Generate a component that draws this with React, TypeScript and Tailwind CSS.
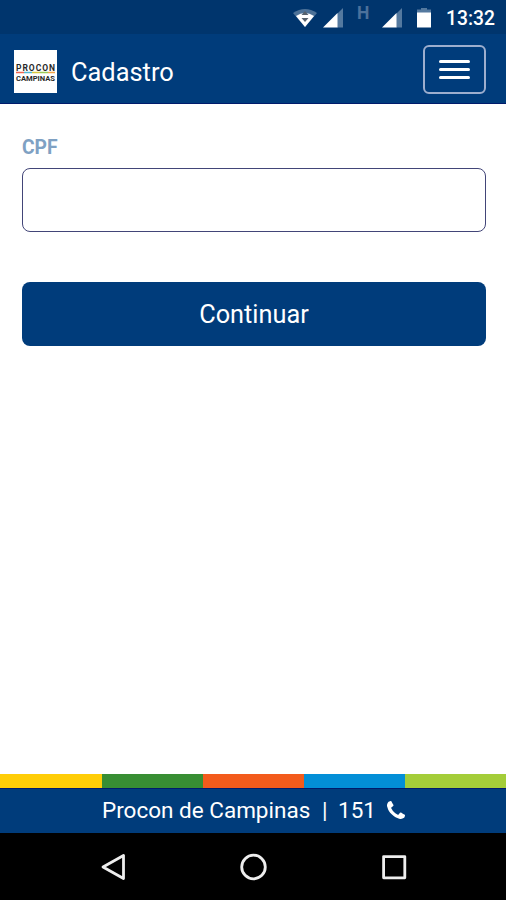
const STRIPES = ["bg-[#ffcd07]", "bg-[#388e33]", "bg-[#f35b1c]", "bg-[#038fd7]", "bg-[#a4cd39]"];

function SignalIcon() {
  return (
    <svg width="22" height="20" viewBox="0 0 22 20" className="shrink-0">
      <path d="M14 6 L20 0 V19.5 H14 Z" fill="#54799f" />
      <path d="M0 19.5 L14.5 5 V19.5 Z" fill="#fff" />
    </svg>
  );
}

function StatusBar() {
  return (
    <div className="flex h-[34px] shrink-0 items-start bg-[#00356d] pl-[292px] text-white">
      <svg width="26" height="20" viewBox="0 0 26 20" className="mt-[8px] shrink-0">
        <path d="M1 5 Q13 -3 25 5 L13 19 Z" fill="#4d7298" />
        <path d="M4 8 Q13 2 22 8 L13 19 Z" fill="#fff" />
        <path d="M9.5 7 L13 3 L16.5 7 Z M9.5 10 H16.5 L13 14 Z" fill="#56616d" />
      </svg>
      <div className="ml-[5px] mt-[8px]"><SignalIcon /></div>
      <span className="ml-[12px] mt-[5px] w-[13px] text-[17.5px] leading-4 font-bold text-[#4c719b]">H</span>
      <div className="ml-[12px] mt-[8px]"><SignalIcon /></div>
      <svg width="14" height="20" viewBox="0 0 14 20" className="ml-[13px] mt-[8px] shrink-0">
        <path d="M0 1.5 H4 V0 H10 V1.5 H14 V5 H0 Z" fill="#54799f" />
        <path d="M0 4.5 H14 V19.5 H0 Z" fill="#fff" />
      </svg>
      <span className="ml-[15px] mt-[9px] text-[19.3px] leading-5 font-medium">13:32</span>
    </div>
  );
}

function Logo() {
  return (
    <svg width="43" height="43" viewBox="0 0 43 43" className="shrink-0 bg-white" fontFamily="Roboto, sans-serif">
      <text x="2" y="20.5" fontSize="8.5" fontWeight="700" textLength="39" lengthAdjust="spacing" fill="#292929">PROCON</text>
      <path d="M2 22.5 H10" stroke="#ef6651" strokeWidth="1.5" />
      <path d="M10 22.5 H18" stroke="#50b9d5" strokeWidth="1.5" />
      <path d="M18 22.5 H26" stroke="#d9c83c" strokeWidth="1.5" />
      <path d="M26 22.5 H34" stroke="#9aca58" strokeWidth="1.5" />
      <path d="M34 22.5 H41" stroke="#f3a548" strokeWidth="1.5" />
      <text x="2" y="31" fontSize="8" fontWeight="700" textLength="39" lengthAdjust="spacingAndGlyphs" fill="#292929">CAMPINAS</text>
    </svg>
  );
}

function Header() {
  return (
    <header className="flex h-[70px] shrink-0 items-center border-b border-[#001b6b] bg-[#003c7b] pl-[14px] pr-[20px] pt-[6px] text-white">
      <Logo />
      <h1 className="ml-[14px] text-[25.4px] leading-8">Cadastro</h1>
      <button
        aria-label="Menu"
        className="-mt-[5px] ml-auto flex h-[49px] w-[63px] flex-col items-center justify-center gap-[5px] rounded-md border-2 border-[#9daece]"
      >
        <span className="h-[3px] w-[31px] rounded-full bg-white" />
        <span className="h-[3px] w-[31px] rounded-full bg-white" />
        <span className="h-[3px] w-[31px] rounded-full bg-white" />
      </button>
    </header>
  );
}

function Footer() {
  return (
    <footer className="shrink-0">
      <div className="grid h-[14px] grid-cols-[102px_101px_101px_101px_1fr]">
        {STRIPES.map((color) => (
          <div key={color} className={color} />
        ))}
      </div>
      <div className="flex h-[45px] items-center border-t border-[#001b6b] bg-[#003c7b] pb-[3px] pl-[102px] text-[22.5px] leading-7 text-white">
        <span className="w-[208px] whitespace-pre">Procon de Campinas</span>
        <span className="ml-[12px] w-[5px]">|</span>
        <span className="ml-[11px] w-[39px]">151</span>
        <svg width="18" height="18" viewBox="0 0 1408 1408" fill="currentColor" className="ml-[10px] shrink-0">
          <path d="M1408 1112q0 27-10 70.5t-21 68.5q-21 50-122 106-94 51-186 51-27 0-53-3.5t-57.5-12.5-47-14.5-55.5-20.5-49-18q-98-35-175-83-127-79-264-216t-216-264q-48-77-83-175-3-9-18-49t-20.5-55.5-14.5-47-12.5-57.5-3.5-53q0-92 51-186 56-101 106-122 25-11 68.5-21t70.5-10q14 0 21 3 18 6 53 76 11 19 30 54t35 63.5 31 53.5q3 4 17.5 25t21.5 35.5 7 28.5q0 20-28.5 50t-62 55-62 53-28.5 46q0 9 5 22.5t8.5 20.5 14 24 11.5 19q76 137 174 235t235 174q2 1 19 11.5t24 14 20.5 8.5 22.5 5q18 0 46-28.5t53-62 55-62 50-28.5q14 0 28.5 7t35.5 21.5 25 17.5q25 15 53.5 31t63.5 35 54 30q70 35 76 53 3 7 3 21z" />
        </svg>
      </div>
    </footer>
  );
}

function NavigationBar() {
  return (
    <nav className="flex h-[67px] shrink-0 items-center justify-between bg-black pl-[100px] pr-[98px]">
      <svg width="28" height="28" viewBox="0 0 28 28" fill="none" stroke="#eee" strokeWidth="2.8" strokeLinejoin="round">
        <path d="M3 14 L23.5 2.5 V25.5 Z" />
      </svg>
      <svg width="28" height="28" viewBox="0 0 28 28" fill="none" stroke="#eee" strokeWidth="2.8">
        <circle cx="13.5" cy="14" r="11.8" />
      </svg>
      <svg width="28" height="28" viewBox="0 0 28 28" fill="none" stroke="#eee" strokeWidth="2.8" strokeLinejoin="round">
        <rect x="3.6" y="3.6" width="21.2" height="21.2" />
      </svg>
    </nav>
  );
}

export default function App() {
  return (
    <div className="flex h-[900px] w-full flex-col overflow-hidden bg-white font-[Roboto,sans-serif]">
      <StatusBar />
      <Header />
      <main className="flex flex-1 flex-col pl-[22px] pr-[20px] pt-[32px]">
        <label htmlFor="cpf" className="text-[19.3px] leading-6 font-bold text-[#7fa1c3]">CPF</label>
        <input id="cpf" className="mt-[8px] h-[64px] w-full rounded-lg border-[1.5px] border-[#424578] bg-white px-4 text-xl outline-none" />
        <button className="mt-[50px] h-[64px] w-full rounded-lg bg-[#003c7b] pt-px text-[25.3px] text-white">Continuar</button>
      </main>
      <Footer />
      <NavigationBar />
    </div>
  );
}
